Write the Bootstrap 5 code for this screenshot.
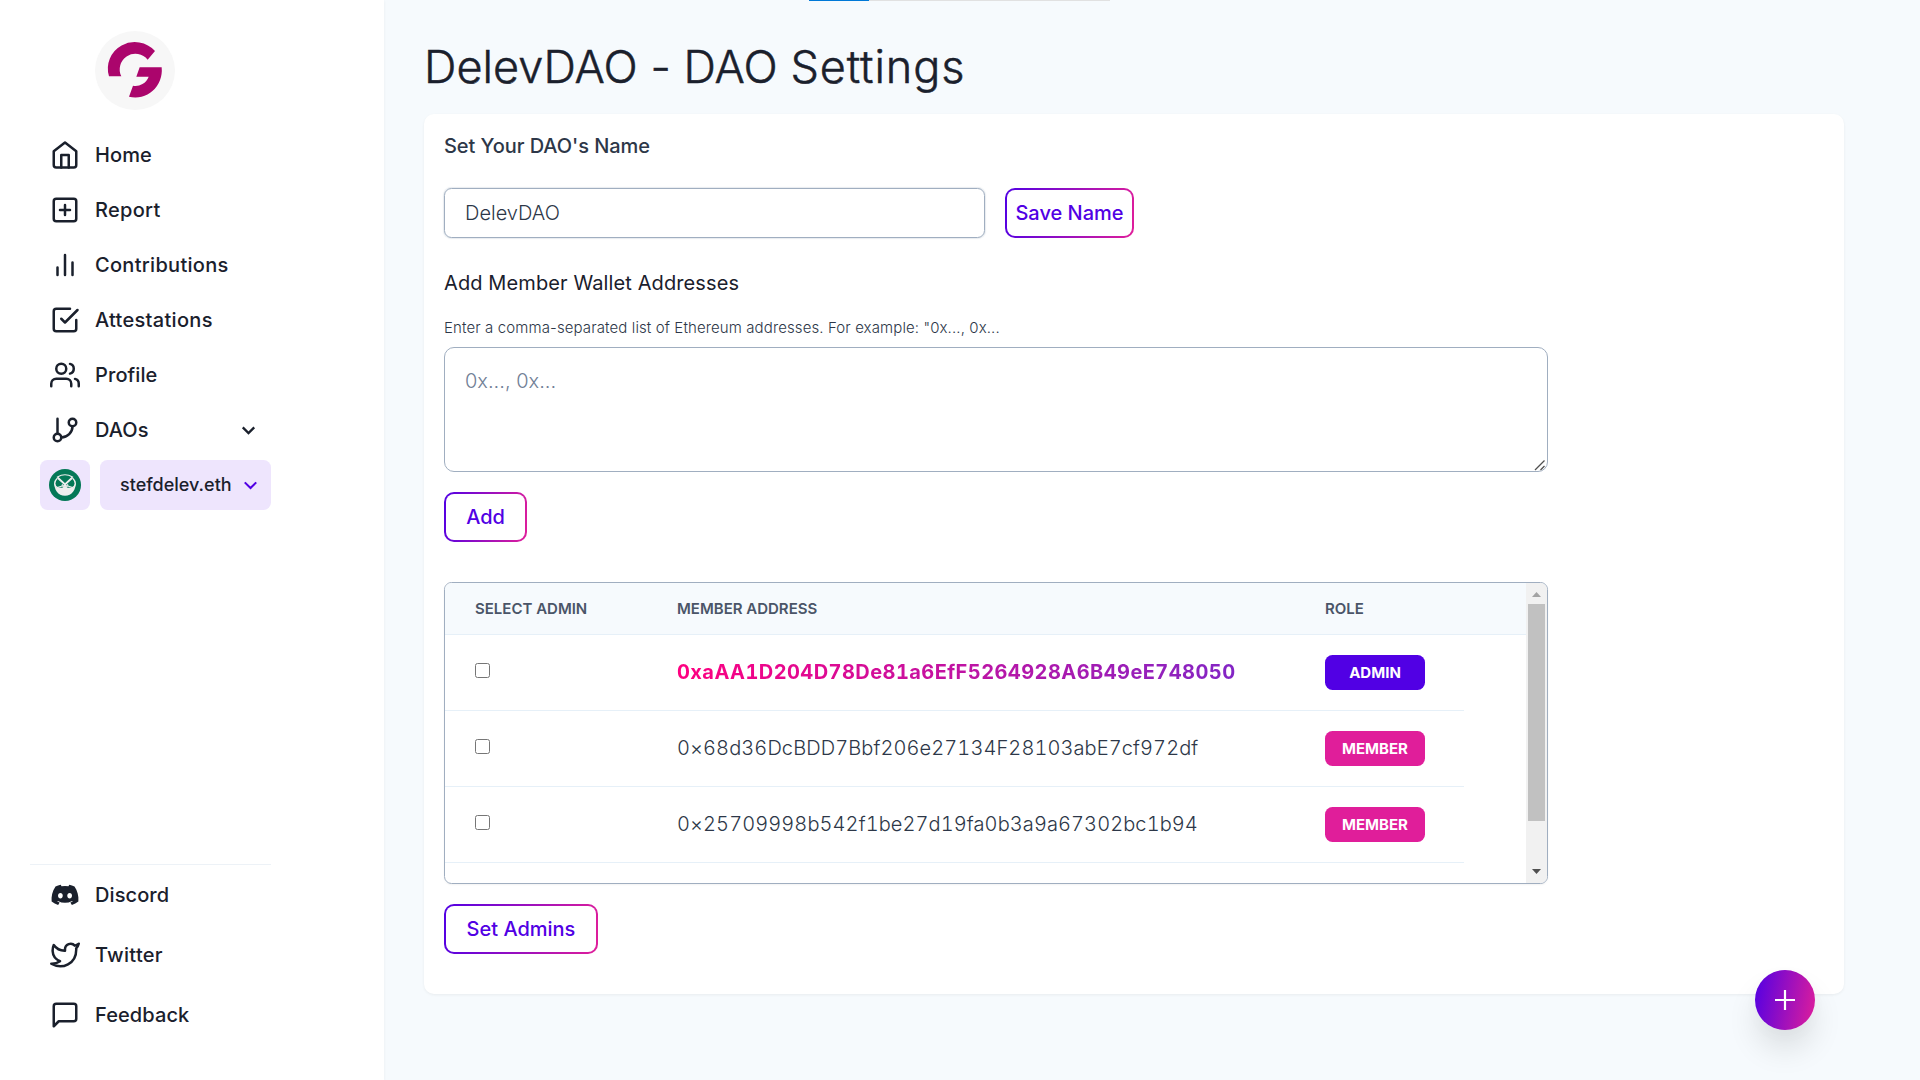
<!DOCTYPE html>
<html lang="en">
<head>
<meta charset="utf-8">
<meta name="viewport" content="width=device-width, initial-scale=1">
<title>DelevDAO - DAO Settings</title>
<link href="https://cdn.jsdelivr.net/npm/bootstrap@5.3.0/dist/css/bootstrap.min.css" rel="stylesheet">
<style>
  :root { --ink:#1a202c; --slate:#2d3748; --line:#a0aec0; --violet:#5100e4; --pink:#e01e9a; --wash:#f6fafd; }
  html, body { height:100%; }
  body { font-family:Inter, sans-serif; font-size:20px; line-height:30px; color:var(--ink); background:var(--wash); overflow:hidden; }
  .sidebar { width:384px; flex:none; background:#fff; box-shadow:0 1px 3px rgba(0,0,0,.06); padding:30.5px 113px 35px 30px; }
  .brand { width:80px; height:79px; margin-left:65px; margin-bottom:17.5px; display:block; }
  .side-link { height:55px; padding:0 10px 0 20px; gap:15px; color:var(--ink); font-weight:500; letter-spacing:.1px; }
  .side-link-wide { letter-spacing:.3px; }
  .side-foot .side-link { height:60px; }
  .side-foot { border-top:1px solid #edf2f7; }
  .ico { width:30px; height:30px; flex:none; fill:none; stroke:currentColor; stroke-width:2; stroke-linecap:round; stroke-linejoin:round; }
  .wallet-row { gap:10px; margin-top:3px; padding-left:10px; }
  .tile { background:#eee5fd; border-radius:7.5px; height:50px; border:0; }
  .network { width:50px; }
  .wallet { width:171px; font-size:18px; font-weight:500; padding:0 8px 0 20px; color:var(--ink); }
  .main-pane { padding:34px 76px 0 40px; min-width:0; }
  .page-title { font-size:45px; line-height:66px; font-weight:300; letter-spacing:.03px; -webkit-text-stroke:.5px var(--ink); margin:0 0 14px; }
  .title-tail { letter-spacing:.9px; }
  .panel { background:#fff; border-radius:10px; height:880px; padding:17px 20px; box-shadow:0 1px 3px rgba(0,0,0,.06); }
  .block { width:1104px; }
  .section-title { font-size:20px; line-height:30px; margin:0; }
  .field { border:1px solid var(--line); border-radius:7.5px; font-size:20px; font-weight:300; color:var(--slate); padding:0 20px; }
  .name-field { width:541px; height:50px; box-shadow:0 0 1px 1px rgba(160,174,192,.25); }
  .address-field { height:125px; padding:18px 20px; resize:none; border-radius:10px; }
  .address-field::placeholder { color:#718096; opacity:1; }
  .grip { right:2px; bottom:1px; width:12px; height:12px; }
  .hint { font-size:15px; line-height:22px; font-weight:300; color:var(--slate); letter-spacing:.11px; margin:19px 0 8px; }
  .btn-grad { height:50px; padding:0; border:2px solid transparent; border-radius:10px; font-size:20px; font-weight:500; color:var(--violet);
    background:linear-gradient(#fff,#fff) padding-box, linear-gradient(100deg,var(--violet),var(--pink)) border-box; }
  .members { height:302px; border:1px solid var(--line); border-radius:7.5px; overflow:hidden; box-shadow:0 1px 2px rgba(0,0,0,.05); }
  .m-row { display:grid; grid-template-columns:202px 648px 1fr; height:76px; align-items:center; padding-left:30px; border-bottom:1px solid #e6f0f8; width:1019px; }
  .m-head { height:52px; width:auto; background:var(--wash); font-size:15px; font-weight:600; color:#4a5568; }
  .m-row input { width:15px; height:15px; margin:0 0 5px; display:block; }
  .addr { font-weight:300; font-variant-numeric:tabular-nums; letter-spacing:.1px; color:var(--slate); padding-bottom:1px; }
  .addr-own { font-weight:700; letter-spacing:.43px; color:transparent; background:linear-gradient(90deg,#ff0080,#7928ca); -webkit-background-clip:text; background-clip:text; width:600px; }
  .role { width:100px; height:35px; border-radius:7.5px; background:var(--pink); color:#fff; font-size:15px; font-weight:700; }
  .role-admin { background:var(--violet); }
  .rail { width:21px; flex:none; background:#f1f1f1; }
  .thumb { width:17px; height:217px; background:#c1c1c1; }
  .rail svg { width:21px; height:21px; display:block; }
  .progress-line { position:absolute; top:0; left:809px; width:301px; height:1px; background:#e1e1e1; }
  .progress-line div { width:60px; height:1px; background:#0078d7; }
  .fab { position:absolute; right:105px; bottom:50px; width:60px; height:60px; border:0; background:linear-gradient(100deg,var(--violet),var(--pink)); color:#fff; box-shadow:0 20px 30px rgba(0,0,0,.1), 0 5px 20px rgba(0,0,0,.02); }
</style>
<script src="https://cdn.jsdelivr.net/npm/bootstrap@5.3.0/dist/js/bootstrap.bundle.min.js"></script>
</head>
<body>
<div class="progress-line"><div></div></div>
<div class="d-flex vh-100">
  <aside class="sidebar d-flex flex-column">
    <svg class="brand" viewBox="30 31 240 237">
      <ellipse cx="150" cy="149.500" rx="120" ry="118.500" fill="#f7f7f7"/>
      <path fill="#ab056c" d="M72 167A81 79.500 0 0 1 210 91L188 117A47 47 0 0 0 109 167ZM164 140H230A79 82 0 0 1 132 228L144 195A42 42 0 0 0 191 168H154Z"/>
    </svg>
    <nav class="nav flex-column">
      <a class="side-link d-flex align-items-center text-decoration-none" href="#"><svg class="ico" viewBox="0 0 24 24"><path d="M3 9l9-7 9 7v11a2 2 0 0 1-2 2H5a2 2 0 0 1-2-2z"/><path d="M9 22V12h6v10"/></svg>Home</a>
      <a class="side-link side-link-wide d-flex align-items-center text-decoration-none" href="#"><svg class="ico" viewBox="0 0 24 24"><rect x="3" y="3" width="18" height="18" rx="2"/><path d="M12 8v8M8 12h8"/></svg>Report</a>
      <a class="side-link side-link-wide d-flex align-items-center text-decoration-none" href="#"><svg class="ico" viewBox="0 0 24 24"><path d="M18 20V10M12 20V4M6 20v-6"/></svg>Contributions</a>
      <a class="side-link side-link-wide d-flex align-items-center text-decoration-none" href="#"><svg class="ico" viewBox="0 0 24 24"><path d="M9 11l3 3L22 4"/><path d="M21 12v7a2 2 0 0 1-2 2H5a2 2 0 0 1-2-2V5a2 2 0 0 1 2-2h11"/></svg>Attestations</a>
      <a class="side-link d-flex align-items-center text-decoration-none" href="#"><svg class="ico" viewBox="0 0 24 24"><path d="M17 21v-2a4 4 0 0 0-4-4H5a4 4 0 0 0-4 4v2"/><circle cx="9" cy="7" r="4"/><path d="M23 21v-2a4 4 0 0 0-3-3.870M16 3.130a4 4 0 0 1 0 7.750"/></svg>Profile</a>
      <a class="side-link d-flex align-items-center text-decoration-none" href="#"><svg class="ico" viewBox="0 0 24 24"><path d="M6 3v12"/><circle cx="18" cy="6" r="3"/><circle cx="6" cy="18" r="3"/><path d="M18 9a9 9 0 0 1-9 9"/></svg>DAOs<svg class="ms-auto" width="25" height="25" viewBox="0 0 24 24" fill="none" stroke="currentColor" stroke-width="2.200"><path d="M6.500 10l5.500 5.500L17.500 10"/></svg></a>
    </nav>
    <div class="wallet-row d-flex">
      <button class="tile network p-0 d-flex align-items-center justify-content-center" aria-label="Network">
        <svg width="32" height="32" viewBox="0 0 32 32"><circle cx="16" cy="16" r="16" fill="#047857"/><path d="M5 12C5 21 9 26.800 16 26.800S27 21 27 12L24.500 18.800H18.500L16 16.500L13.500 18.800H7.500Z" fill="#eee"/><path d="M8.500 8Q16 3.500 23.500 8L16 15Z" fill="#047857" stroke="#eee" stroke-width="1.200"/><path d="M8 9.500C4.500 13 5.500 17.500 8 18.300C10 18.700 12 18 14 15.500M24 9.500C27.500 13 26.500 17.500 24 18.300C22 18.700 20 18 18 15.500M8.500 9L18.500 18M23.500 9L13.500 18" fill="none" stroke="#eee" stroke-width="1.300"/><path d="M8.500 16.300L10.300 14.300L12.200 16.300ZM19.800 16.300L21.700 14.300L23.500 16.300Z" fill="#047857" stroke="#047857"/></svg>
      </button>
      <button class="tile wallet d-flex align-items-center justify-content-between">stefdelev.eth<svg width="25" height="25" viewBox="0 0 24 24" fill="none" stroke="#5100e4" stroke-width="2"><path d="M6.500 9l5.500 5.500L17.500 9"/></svg></button>
    </div>
    <div class="side-foot mt-auto">
      <a class="side-link d-flex align-items-center text-decoration-none" href="#"><svg class="ico" style="fill:currentColor;stroke:none" viewBox="0 0 24 24"><path d="M19.600 5.200A17 17 0 0 0 15.400 3.800l-.6 1.200a16 16 0 0 0-5.600 0l-.6-1.200a17 17 0 0 0-4.200 1.400C1.700 9.200 1 13.200 1.300 17.200a17 17 0 0 0 5.200 2.700l1.200-1.900-1.900-.9.500-.4a12.200 12.200 0 0 0 11.400 0l.5.400-1.900.9 1.200 1.900a17 17 0 0 0 5.200-2.700c.4-4.700-.8-8.600-3.100-12zM8.300 14.700c-1 0-1.900-1-1.900-2.200s.8-2.200 1.900-2.200 2 1 1.900 2.200c0 1.200-.8 2.200-1.900 2.200zm7.400 0c-1 0-1.900-1-1.900-2.200s.8-2.200 1.900-2.200 2 1 1.900 2.200c0 1.200-.8 2.200-1.900 2.200z"/></svg>Discord</a>
      <a class="side-link side-link-wide d-flex align-items-center text-decoration-none" href="#"><svg class="ico" viewBox="0 0 24 24"><path d="M23 3a10.900 10.900 0 0 1-3.140 1.530 4.480 4.480 0 0 0-7.860 3v1A10.660 10.660 0 0 1 3 4s-4 9 5 13a11.640 11.640 0 0 1-7 2c9 5 20 0 20-11.500a4.500 4.500 0 0 0-.08-.83A7.720 7.720 0 0 0 23 3z"/></svg>Twitter</a>
      <a class="side-link d-flex align-items-center text-decoration-none" href="#"><svg class="ico" viewBox="0 0 24 24"><path d="M21 15a2 2 0 0 1-2 2H7l-4 4V5a2 2 0 0 1 2-2h14a2 2 0 0 1 2 2z"/></svg>Feedback</a>
    </div>
  </aside>

  <main class="main-pane flex-grow-1">
    <h1 class="page-title">DelevDAO - DAO <span class="title-tail">Settings</span></h1>
    <section class="panel">
      <h2 class="section-title" style="color:#2d3748;font-weight:500;letter-spacing:-.05px">Set Your DAO's Name</h2>
      <div class="d-flex" style="gap:20px;margin-top:27px">
        <input class="field name-field" type="text" value="DelevDAO" aria-label="DAO name">
        <button class="btn-grad" style="width:129px">Save Name</button>
      </div>
      <div class="block">
        <h2 class="section-title" style="margin-top:30px;font-weight:400;letter-spacing:.11px">Add Member Wallet Addresses</h2>
        <div class="hint">Enter a comma-separated list of Ethereum addresses. For example: "0x..., 0x...</div>
        <div class="position-relative">
          <textarea class="field address-field w-100 d-block" placeholder="0x..., 0x..." aria-label="Member addresses"></textarea>
          <svg class="grip position-absolute" viewBox="0 0 12 12" stroke="#505050" stroke-width="1.300" fill="none"><path d="M1 11L10.500 1.500M6.500 11L10.500 7"/></svg>
        </div>
        <button class="btn-grad d-block" style="width:83px;margin:20px 0 40px">Add</button>
        <div class="members d-flex">
          <div class="flex-grow-1">
            <div class="m-row m-head"><span>SELECT ADMIN</span><span>MEMBER ADDRESS</span><span>ROLE</span></div>
            <div class="m-row"><input type="checkbox" aria-label="Select"><span class="addr addr-own">0xaAA1D204D78De81a6EfF5264928A6B49eE748050</span><span class="role role-admin d-flex align-items-center justify-content-center">ADMIN</span></div>
            <div class="m-row"><input type="checkbox" aria-label="Select"><span class="addr">0×68d36DcBDD7Bbf206e27134F28103abE7cf972df</span><span class="role d-flex align-items-center justify-content-center">MEMBER</span></div>
            <div class="m-row"><input type="checkbox" aria-label="Select"><span class="addr">0×25709998b542f1be27d19fa0b3a9a67302bc1b94</span><span class="role d-flex align-items-center justify-content-center">MEMBER</span></div>
          </div>
          <div class="rail d-flex flex-column align-items-center">
            <svg viewBox="0 0 21 21"><path d="M6 14l4.500-5 4.500 5z" fill="#a3a3a3"/></svg>
            <div class="thumb"></div>
            <svg class="mt-auto" viewBox="0 0 21 21"><path d="M6 7l4.500 5L15 7z" fill="#505050"/></svg>
          </div>
        </div>
        <button class="btn-grad d-block" style="width:154px;margin-top:20px">Set Admins</button>
      </div>
    </section>
  </main>
</div>
<button class="fab rounded-circle d-flex align-items-center justify-content-center p-0" aria-label="Add"><svg width="30" height="30" viewBox="0 0 30 30" fill="none" stroke="#fff" stroke-width="2.200"><path d="M15 5v20M5 15h20"/></svg></button>
</body>
</html>
